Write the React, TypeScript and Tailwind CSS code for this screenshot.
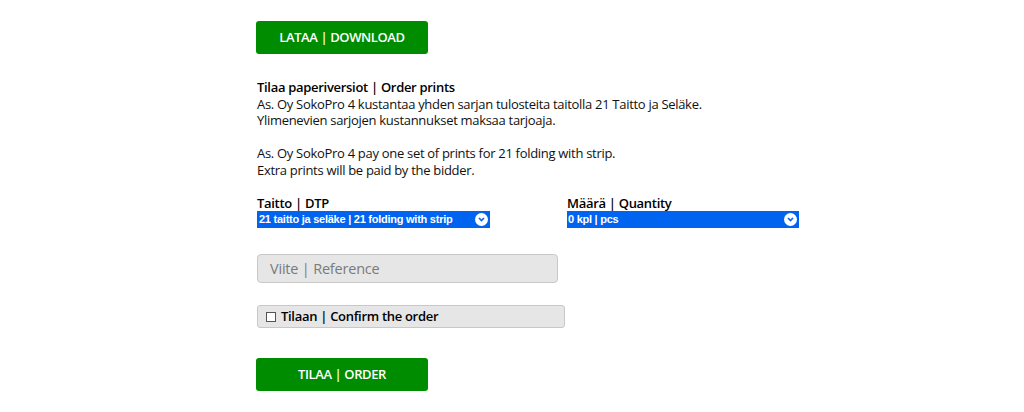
import React from "react";

const Chevron = () => (
  <span className="flex h-[13px] w-[13px] items-center justify-center rounded-full bg-white">
    <svg width="7" height="5" viewBox="0 0 7 5">
      <path d="M1 1l2.5 2.5L6 1" stroke="#0064f0" strokeWidth="1.6" fill="none" />
    </svg>
  </span>
);

export default function App() {
  const font = { fontFamily: '"Open Sans", "Noto Sans", sans-serif' };
  const arial = { fontFamily: '"Liberation Sans", Arial, sans-serif' };
  return (
    <div className="h-[412px] w-[1024px] bg-white text-black" style={font}>
      <div className="flex flex-col pl-[256px] pt-[21px]">
        <button className="flex h-[33px] w-[172px] items-center justify-center rounded-[3px] bg-[#008c00] text-[13px] font-semibold tracking-[-0.4px] text-white">
          LATAA | DOWNLOAD
        </button>
        <div className="mt-[25px] pl-[1px] text-[13px] leading-[16.5px] tracking-[-0.3px] text-[#111]">
          <div className="font-semibold text-black">Tilaa paperiversiot | Order prints</div>
          <div>As. Oy SokoPro 4 kustantaa yhden sarjan tulosteita taitolla 21 Taitto ja Seläke.</div>
          <div>Ylimenevien sarjojen kustannukset maksaa tarjoaja.</div>
          <div className="h-[16.5px]" />
          <div>As. Oy SokoPro 4 pay one set of prints for 21 folding with strip.</div>
          <div>Extra prints will be paid by the bidder.</div>
        </div>
        <div className="mt-[18px] flex gap-[77px] pl-[1px]">
          <div className="flex w-[233px] flex-col">
            <div className="text-[13px] font-semibold leading-[15px] tracking-[-0.3px]">Taitto | DTP</div>
            <div
              className="flex h-[17px] items-center justify-between bg-[#0064f0] pl-[2px] pr-[2px] text-[11px] font-bold tracking-[-0.25px] text-white"
              style={arial}
            >
              <span>21 taitto ja seläke | 21 folding with strip</span>
              <Chevron />
            </div>
          </div>
          <div className="flex w-[232px] flex-col">
            <div className="text-[13px] font-semibold leading-[15px] tracking-[-0.3px]">Määrä | Quantity</div>
            <div
              className="flex h-[17px] items-center justify-between bg-[#0064f0] pl-[1px] pr-[2px] text-[11px] font-bold tracking-[-0.25px] text-white"
              style={arial}
            >
              <span>0 kpl | pcs</span>
              <Chevron />
            </div>
          </div>
        </div>
        <div className="mt-[26px] pl-[1px]">
          <div className="flex h-[29px] w-[301px] items-center rounded-[4px] border border-[#c8c8c8] bg-[#e6e6e6] pl-[12px] text-[14.5px] tracking-[-0.2px] text-[#7a7a7a]">
            Viite | Reference
          </div>
        </div>
        <div className="mt-[22px] pl-[1px]">
          <div className="flex h-[23px] w-[308px] items-center gap-[5px] rounded-[3px] border border-[#c8c8c8] bg-[#e6e6e6] pl-[8px] text-[13px] font-semibold tracking-[-0.3px]">
            <span className="inline-block h-[10px] w-[10px] border border-[#555] bg-white" />
            <span>Tilaan | Confirm the order</span>
          </div>
        </div>
        <button className="mt-[30px] flex h-[33px] w-[172px] items-center justify-center rounded-[3px] bg-[#008c00] text-[13px] font-semibold tracking-[-0.4px] text-white">
          TILAA | ORDER
        </button>
      </div>
    </div>
  );
}
